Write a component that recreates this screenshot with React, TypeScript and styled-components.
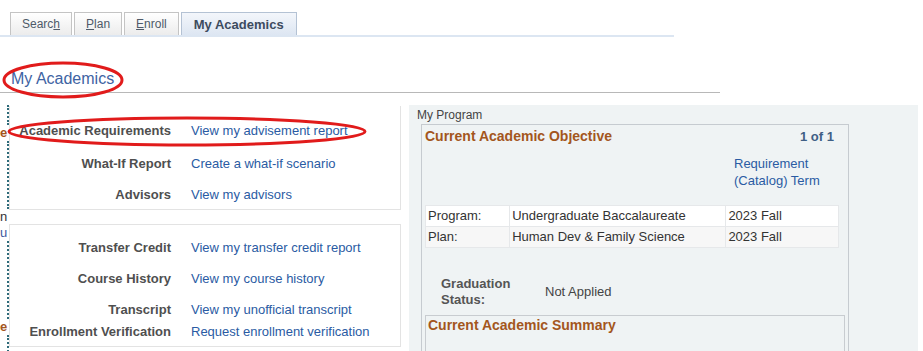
import React from 'react';
import { styled, createGlobalStyle } from 'styled-components';

const GlobalStyle = createGlobalStyle`
  html, body {
    margin: 0;
    padding: 0;
    background: #ffffff;
    font-family: "Liberation Sans", Arial, sans-serif;
  }
`;

const Page = styled.div`
  position: relative;
  width: 923px;
  height: 351px;
  overflow: hidden;
  background: #fff;
`;

const TabBar = styled.div`
  display: flex;
  gap: 2px;
  width: 664px;
  padding: 12px 0 0 10px;
  border-bottom: 2px solid #dce6f2;
`;

const Tab = styled.div<{ $active?: boolean }>`
  box-sizing: border-box;
  height: 23px;
  padding: 0 ${({ $active }) => ($active ? '12px' : '11px')};
  display: flex;
  align-items: center;
  border: 1px solid ${({ $active }) => ($active ? '#b4c2d4' : '#c4c4c4')};
  border-bottom: none;
  background: ${({ $active }) =>
    $active
      ? 'linear-gradient(#f3f6fb, #dde6f2)'
      : 'linear-gradient(#ffffff, #ececec)'};
  color: ${({ $active }) => ($active ? '#3d4b5e' : '#4e5a68')};
  font-size: ${({ $active }) => ($active ? '13px' : '12px')};
  font-weight: ${({ $active }) => ($active ? 700 : 400)};

  u {
    text-decoration: underline;
  }
`;

const HeaderArea = styled.div`
  width: 720px;
  height: 56px;
  box-sizing: border-box;
  padding: 33px 0 0 11px;
  border-bottom: 1px solid #b8b8b8;
`;

const PageTitle = styled.h1`
  margin: 0;
  font-size: 16px;
  line-height: 18px;
  font-weight: 400;
  color: #3e63a3;
`;

const Body = styled.div`
  display: flex;
  align-items: flex-start;
  padding-top: 12px;
`;

const EdgeStrip = styled.div`
  width: 9px;
  height: 250px;
  overflow: hidden;
  display: flex;
  flex-direction: column;
  font-size: 13px;
  line-height: 16px;
`;

const EdgeCell = styled.div<{ $color?: string; $bold?: boolean; $h: number; $dots?: boolean }>`
  height: ${({ $h }) => $h}px;
  color: ${({ $color }) => $color || '#3a4a6a'};
  font-weight: ${({ $bold }) => ($bold ? 700 : 400)};
  white-space: nowrap;
  border-right: 2px dotted ${({ $dots }) => ($dots ? '#2e6b7a' : 'transparent')};
  box-sizing: border-box;
`;

const LeftColumn = styled.div`
  width: 392px;
  display: flex;
  flex-direction: column;
  gap: 14px;
  padding-top: 1px;
`;

const LinkBox = styled.div<{ $top: number; $ruled?: boolean }>`
  border: 1px solid #e3e3e3;
  border-top: ${({ $ruled }) => ($ruled ? '1px solid #e3e3e3' : 'none')};
  padding: ${({ $top }) => $top}px 0 7px 0;
  display: flex;
  flex-direction: column;
`;

const LinkRow = styled.div<{ $space?: number }>`
  display: grid;
  grid-template-columns: 161px 1fr;
  column-gap: 20px;
  margin-top: ${({ $space }) => $space || 0}px;
  font-size: 13px;
  line-height: 15px;
`;

const RowLabel = styled.span`
  text-align: right;
  font-weight: 700;
  color: #4f4f4f;
  white-space: nowrap;
`;

const RowLink = styled.a`
  color: #2a5ba3;
  text-decoration: none;
  white-space: nowrap;
`;

const ProgramPanel = styled.div`
  margin-left: 8px;
  width: 509px;
  height: 260px;
  background: #eff3f4;
  padding-top: 2px;
  box-sizing: border-box;
`;

const PanelCaption = styled.div`
  padding-left: 8px;
  font-size: 12px;
  line-height: 17px;
  color: #444;
`;

const ObjectiveBox = styled.div`
  margin-left: 12px;
  width: 428px;
  box-sizing: border-box;
  border: 1px solid #c6cbd0;
  border-bottom: none;
  height: 240px;
`;

const BoxHeader = styled.div`
  display: flex;
  justify-content: space-between;
  padding: 3px 14px 0 3px;
  line-height: 17px;
`;

const SectionTitle = styled.span`
  font-size: 14px;
  font-weight: 700;
  color: #a3561d;
`;

const Counter = styled.span`
  font-size: 13px;
  font-weight: 700;
  color: #3f5f85;
`;

const TermCaption = styled.div`
  margin-top: 10px;
  padding-left: 312px;
  font-size: 13px;
  line-height: 17px;
  color: #2a5ba3;
`;

const ProgramTable = styled.table`
  margin: 16px 0 0 3px;
  width: 414px;
  border-collapse: collapse;
  font-size: 13px;
  color: #333;
`;

const TableRow = styled.tr<{ $alt?: boolean }>`
  background: ${({ $alt }) => ($alt ? '#f7f7f7' : '#ffffff')};
`;

const Cell = styled.td<{ $w: number }>`
  width: ${({ $w }) => $w}px;
  height: 20px;
  padding: 0 0 0 2px;
  border: 1px solid #e6e8ea;
  line-height: 20px;
`;

const StatusRow = styled.div`
  display: grid;
  grid-template-columns: 104px 1fr;
  align-items: center;
  margin-top: 28px;
  padding-left: 19px;
  font-size: 13px;
  line-height: 16px;
`;

const StatusLabel = styled.span`
  font-weight: 700;
  color: #555;
`;

const StatusValue = styled.span`
  color: #444;
`;

const SummaryBox = styled.div`
  margin: 7px 0 0 3px;
  width: 420px;
  height: 60px;
  box-sizing: border-box;
  border: 1px solid #c8ccd0;
  padding: 0 0 0 2px;
  line-height: 17px;
`;

const Annotations = styled.svg`
  position: absolute;
  left: 0;
  top: 0;
  pointer-events: none;
`;

const topLinks = [
  { label: 'Academic Requirements', link: 'View my advisement report', space: 0 },
  { label: 'What-If Report', link: 'Create a what-if scenario', space: 18 },
  { label: 'Advisors', link: 'View my advisors', space: 16 },
];

const bottomLinks = [
  { label: 'Transfer Credit', link: 'View my transfer credit report', space: 0 },
  { label: 'Course History', link: 'View my course history', space: 16 },
  { label: 'Transcript', link: 'View my unofficial transcript', space: 16 },
  { label: 'Enrollment Verification', link: 'Request enrollment verification', space: 7 },
];

export default function App() {
  return (
    <Page>
      <GlobalStyle />
      <TabBar>
        <Tab>Searc<u>h</u></Tab>
        <Tab><u>P</u>lan</Tab>
        <Tab><u>E</u>nroll</Tab>
        <Tab $active>My Academics</Tab>
      </TabBar>
      <HeaderArea>
        <PageTitle>My Academics</PageTitle>
      </HeaderArea>
      <Body>
        <EdgeStrip>
          <EdgeCell $h={20} $dots />
          <EdgeCell $h={16} $color="#a3561d" $bold>e</EdgeCell>
          <EdgeCell $h={70} $dots />
          <EdgeCell $h={16} $color="#333">n</EdgeCell>
          <EdgeCell $h={16} $color="#3e5a9e">u</EdgeCell>
          <EdgeCell $h={80} $dots />
          <EdgeCell $h={16} $color="#a3561d" $bold>e</EdgeCell>
          <EdgeCell $h={20} $dots />
        </EdgeStrip>
        <LeftColumn>
          <LinkBox $top={17}>
            {topLinks.map((r) => (
              <LinkRow key={r.label} $space={r.space}>
                <RowLabel>{r.label}</RowLabel>
                <RowLink>{r.link}</RowLink>
              </LinkRow>
            ))}
          </LinkBox>
          <LinkBox $top={15} $ruled>
            {bottomLinks.map((r) => (
              <LinkRow key={r.label} $space={r.space}>
                <RowLabel>{r.label}</RowLabel>
                <RowLink>{r.link}</RowLink>
              </LinkRow>
            ))}
          </LinkBox>
        </LeftColumn>
        <ProgramPanel>
          <PanelCaption>My Program</PanelCaption>
          <ObjectiveBox>
            <BoxHeader>
              <SectionTitle>Current Academic Objective</SectionTitle>
              <Counter>1 of 1</Counter>
            </BoxHeader>
            <TermCaption>
              Requirement
              <br />
              (Catalog) Term
            </TermCaption>
            <ProgramTable>
              <tbody>
                <TableRow>
                  <Cell $w={82}>Program:</Cell>
                  <Cell $w={217}>Undergraduate Baccalaureate</Cell>
                  <Cell $w={112}>2023 Fall</Cell>
                </TableRow>
                <TableRow $alt>
                  <Cell $w={82}>Plan:</Cell>
                  <Cell $w={217}>Human Dev &amp; Family Science</Cell>
                  <Cell $w={112}>2023 Fall</Cell>
                </TableRow>
              </tbody>
            </ProgramTable>
            <StatusRow>
              <StatusLabel>
                Graduation
                <br />
                Status:
              </StatusLabel>
              <StatusValue>Not Applied</StatusValue>
            </StatusRow>
            <SummaryBox>
              <SectionTitle>Current Academic Summary</SectionTitle>
            </SummaryBox>
          </ObjectiveBox>
        </ProgramPanel>
      </Body>
      <Annotations width="923" height="351" viewBox="0 0 923 351">
        <ellipse cx="63" cy="80" rx="59" ry="17" fill="none" stroke="#e11b1b" strokeWidth="3" />
        <ellipse cx="187" cy="131.5" rx="178" ry="13.5" fill="none" stroke="#e11b1b" strokeWidth="3" />
      </Annotations>
    </Page>
  );
}
